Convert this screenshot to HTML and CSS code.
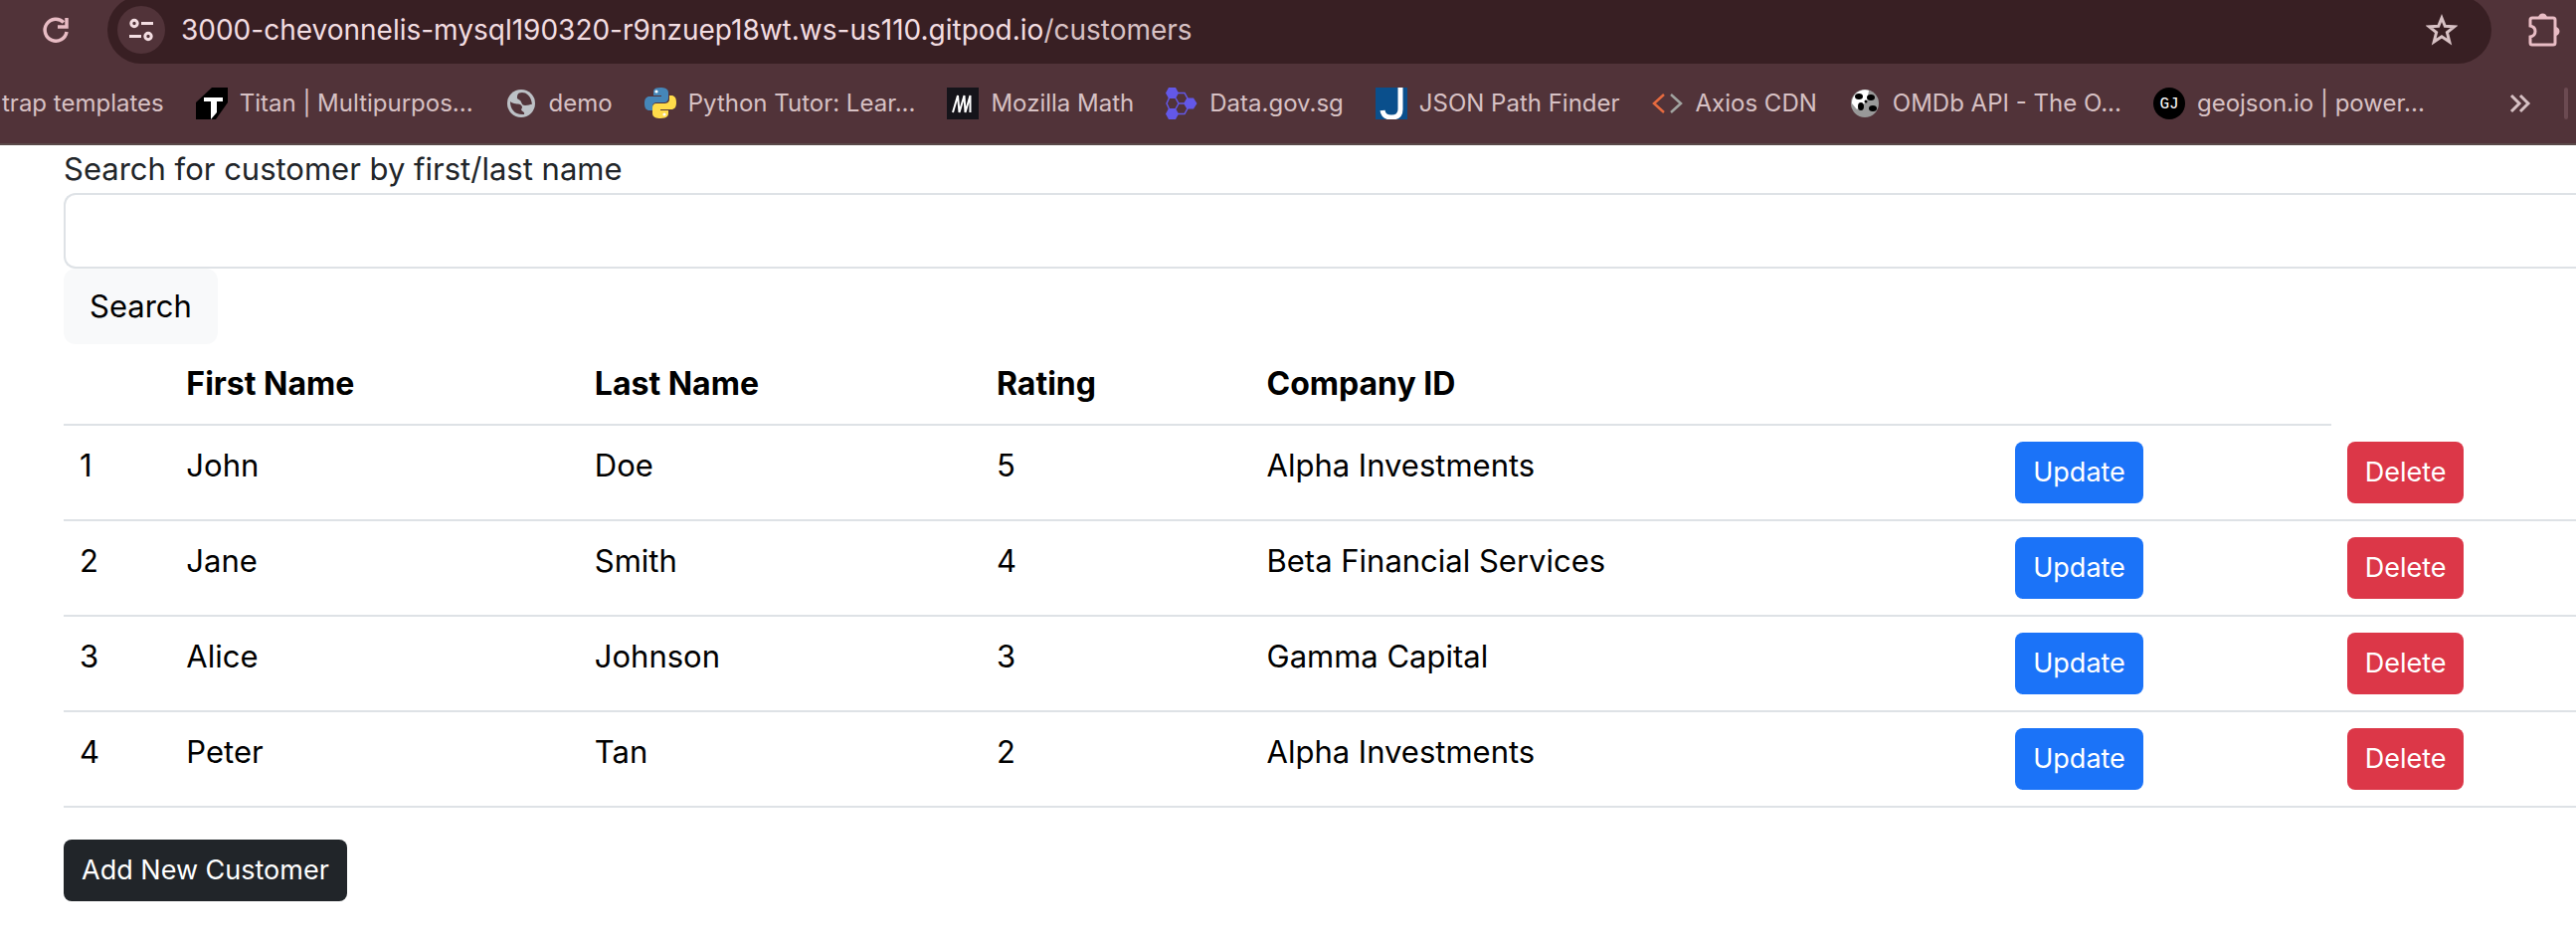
FILE: index.html
```html
<!DOCTYPE html>
<html lang="en">
<head>
<meta charset="utf-8">
<title>Customers</title>
<link rel="stylesheet" href="styles.css">
</head>
<body>
<header class="browser">
  <div class="toolbar">
    <button class="icon-btn reload" aria-label="Reload"><svg width="32" height="32" viewBox="0 0 32 32" fill="none" stroke="#e8bcc4" stroke-width="3.500"><path d="M27 18A11 11 0 1 1 24 8.500"/><path d="M27 4V13H18" stroke-width="3.500"/></svg></button>
    <div class="address">
      <button class="site-info" aria-label="Site information"><svg width="28" height="28" viewBox="0 0 28 28" fill="none" stroke="#f2dde1" stroke-width="3"><circle cx="7" cy="7.500" r="3.200"/><path d="M14 7.500H26M2 20.500H14"/><circle cx="21" cy="20.500" r="3.200"/></svg></button>
      <a class="url" href="#">3000-chevonnelis-mysql190320-r9nzuep18wt.ws-us110.gitpod.io<span class="path">/customers</span></a>
      <button class="icon-btn star" aria-label="Bookmark this page"><svg width="32" height="32" viewBox="0 0 32 32" fill="none" stroke="#d7c1c4" stroke-width="3"><path d="M16 4L19.300 12.200L28.500 12.800L21.400 18.500L23.800 28L16 22.800L8.200 28L10.600 18.500L3.500 12.800L12.700 12.200Z"/></svg></button>
    </div>
    <button class="icon-btn" aria-label="Extensions"><svg width="36" height="36" viewBox="0 0 36 36"><path d="M5 8Q5 6 7 6H28Q30 6 30 8V31Q30 33 28 33H7Q5 33 5 31V25Q10 24 10 19.500Q10 15 5 14Z" fill="none" stroke="#e8bcc4" stroke-width="3"/><path d="M13 6a4.500 4.500 0 0 1 9 0zM30 15a4.500 4.500 0 0 1 0 9z" fill="#e8bcc4"/></svg></button>
  </div>
  <nav class="bookmarks" aria-label="Bookmarks">
    <a href="#" class="first">trap templates</a>
    <a href="#"><svg viewBox="0 0 32 32"><path d="M16 0H32V15L20 32H0V15Z"/><path d="M8 10H27V14H21V25L15 32V14H8Z" fill="#fff"/></svg>Titan | Multipurpos...</a>
    <a href="#"><svg viewBox="0 0 32 32"><circle cx="16" cy="16" r="14" fill="#bdc1c6"/><path d="M17 5C12 5 12 8 12 11L15 13C17 15 16 18 20 18C24 18 26 16 27 17C26 8 21 5 17 5ZM5 14C8 17 13 16 15 17C18 19 17 21 16 22C17 25 20 24 19 27C10 28 5 22 5 14Z" fill="#513339"/></svg>demo</a>
    <a href="#"><svg viewBox="0 0 32 32"><path d="M16 0C9 0 9 3 9 5V8H17V9H5C2 9 0 11 0 16S2 23 5 23H8V19C8 16 10 15 12 15H20C22 15 24 13 24 11V5C24 1 20 0 16 0Z" fill="#4586b8"/><path d="M16 31C23 31 24 28 24 26V23H16V22H27C30 22 32 20 32 15S30 8 27 8H25V12C25 15 22 16 20 16H12C9 16 8 18 8 20V26C8 30 12 31 16 31Z" fill="#ffdc4a"/><circle cx="12" cy="4" r="1.600" fill="#fff"/><circle cx="20" cy="27" r="1.600" fill="#fff"/></svg>Python Tutor: Lear...</a>
    <a href="#"><svg viewBox="0 0 32 32"><path d="M0 0H32V32H0Z" fill="#15141a"/><path d="M6 25L11 8L12.500 25L17.500 8L18.500 25L23.500 8V25" fill="none" stroke="#fff" stroke-width="2" stroke-linejoin="bevel"/></svg>Mozilla Math</a>
    <a href="#"><svg viewBox="0 0 32 32"><path d="M3 0H10L13 5.500L10 11H3L0 5.500ZM3 21H10L13 26.500L10 32H3L0 26.500ZM22 10.500H28L31.500 16L28 21.500H22L19 16Z" fill="#6358e8"/><path d="M12 5.500H19L22 11L19 16H13L10 10.500M12 26.500H19L22 21L19 16M3.500 10.500L1 16L3.500 21.500M13 16L10 21.500" fill="none" stroke="#6358e8" stroke-width="1.500"/></svg>Data.gov.sg</a>
    <a href="#"><svg viewBox="0 0 32 32"><path d="M0 0H32V32H0Z" fill="#0a4f8c"/><path d="M25 0V22Q25 30 16 30Q8 30 7 23" fill="none" stroke="#fff" stroke-width="5"/></svg>JSON Path Finder</a>
    <a href="#"><svg viewBox="0 0 32 32" fill="none" stroke-width="2.500"><path d="M12 7L2 16L12 25" stroke="#e56a3f"/><path d="M19 7L29 16L19 25" stroke="#a1a3a0"/></svg>Axios CDN</a>
    <a href="#"><svg viewBox="0 0 32 32"><circle cx="16" cy="16" r="14" fill="#999"/><path d="M3 16A13 13 0 0 1 20 3L18 14L8 22Z" fill="#fff"/><g fill="#000"><ellipse cx="10" cy="9" rx="4" ry="3"/><ellipse cx="22" cy="10" rx="4" ry="3"/><circle cx="17" cy="14" r="1.500"/><ellipse cx="12" cy="19" rx="3" ry="4"/><ellipse cx="24" cy="21" rx="4" ry="3"/></g></svg>OMDb API - The O...</a>
    <a href="#"><svg viewBox="0 0 32 32"><circle cx="16" cy="16" r="16"/><text x="16" y="21" class="gj">GJ</text></svg>geojson.io | power...</a>
    <button class="more" aria-label="More bookmarks"><svg width="24" height="20" viewBox="0 0 24 20" fill="none" stroke="#d7c1c4" stroke-width="3"><path d="M3 2L11 10L3 18M12 2L20 10L12 18"/></svg></button>
    <span class="divider"></span>
  </nav>
</header>
<main class="page">
  <form class="search">
    <label for="q">Search for customer by first/last name</label>
    <input id="q" type="text">
    <button type="button" class="btn btn-light">Search</button>
  </form>
  <table class="customers">
    <colgroup><col class="c-id"><col class="c-first"><col class="c-last"><col class="c-rating"><col class="c-company"><col class="c-update"><col></colgroup>
    <thead><tr><th></th><th>First Name</th><th>Last Name</th><th>Rating</th><th>Company ID</th><th></th></tr></thead>
    <tbody>
      <tr><td>1</td><td>John</td><td>Doe</td><td>5</td><td>Alpha Investments</td><td><a href="#" class="btn btn-sm btn-primary">Update</a></td><td><a href="#" class="btn btn-sm btn-danger">Delete</a></td></tr>
      <tr><td>2</td><td>Jane</td><td>Smith</td><td>4</td><td>Beta Financial Services</td><td><a href="#" class="btn btn-sm btn-primary">Update</a></td><td><a href="#" class="btn btn-sm btn-danger">Delete</a></td></tr>
      <tr><td>3</td><td>Alice</td><td>Johnson</td><td>3</td><td>Gamma Capital</td><td><a href="#" class="btn btn-sm btn-primary">Update</a></td><td><a href="#" class="btn btn-sm btn-danger">Delete</a></td></tr>
      <tr><td>4</td><td>Peter</td><td>Tan</td><td>2</td><td>Alpha Investments</td><td><a href="#" class="btn btn-sm btn-primary">Update</a></td><td><a href="#" class="btn btn-sm btn-danger">Delete</a></td></tr>
    </tbody>
  </table>
  <a href="#" class="btn btn-sm btn-dark">Add New Customer</a>
</main>
</body>
</html>
```
FILE: styles.css
```css
* { box-sizing: border-box; }
body { margin: 0; background: #fff; color: #212529; font: 31px/48px Inter, "Liberation Sans", sans-serif; }
a { color: inherit; text-decoration: none; }
button { font: inherit; border: 0; padding: 0; background: none; }
svg { display: block; flex: none; }

.browser { background: #513339; border-bottom: 2px solid #5a4a49; overflow: hidden; }
.toolbar { display: flex; align-items: center; height: 68px; margin-top: -4px; padding: 0 15px 0 40px; }
.address { flex: 1; display: flex; align-items: center; height: 68px; margin: 0 34px 0 36px; padding: 0 34px 0 10px; border-radius: 34px; background: #381f23; }
.site-info { display: grid; place-items: center; width: 48px; height: 48px; border-radius: 50%; background: #513339; }
.url { flex: 1; margin-left: 16px; font-size: 28px; color: #f2dde1; }
.path { color: #d7c1c4; }

.bookmarks { display: flex; align-items: center; gap: 32px; height: 80px; padding-left: 2px; font-size: 24px; color: #d7c1c4; }
.bookmarks a { display: flex; align-items: center; gap: 12px; white-space: nowrap; }
.bookmarks a svg { width: 32px; height: 32px; }
.gj { fill: #fff; font: 16px "Liberation Mono", monospace; text-anchor: middle; }
.more { margin-left: auto; }
.divider { width: 4px; height: 32px; margin-right: 8px; border-radius: 2px; background: #6b4a51; }

.page { padding-left: 64px; }
.search { display: flex; flex-direction: column; align-items: flex-start; }
.search input { width: 100%; height: 76px; padding: 12px 24px; font: inherit; border: 2px solid #dee2e6; border-right: 0; border-radius: 12px 0 0 12px; background: #fff; }

.btn { display: inline-block; padding: 14px 26px; border-radius: 12px; }
.btn-sm { padding: 10px 18px; border-radius: 8px; font-size: 27px; line-height: 42px; color: #fff; vertical-align: top; }
.btn-light { background: #f8f9fa; color: #000; }
.btn-primary { background: #1b73f8; }
.btn-danger { background: #dc3748; }
.btn-dark { background: #212529; }

.customers { width: 100%; margin-bottom: 32px; table-layout: fixed; border-spacing: 0; color: #000; }
.customers th, .customers td { padding: 16px; text-align: left; vertical-align: top; border-bottom: 2px solid #dee2e6; }
.customers th { font-size: 32px; font-weight: 700; }
.c-id { width: 4.25%; }
.c-first { width: 16.25%; }
.c-last { width: 16%; }
.c-rating { width: 10.75%; }
.c-company { width: 29.8%; }
.c-update { width: 13.2%; }
```
